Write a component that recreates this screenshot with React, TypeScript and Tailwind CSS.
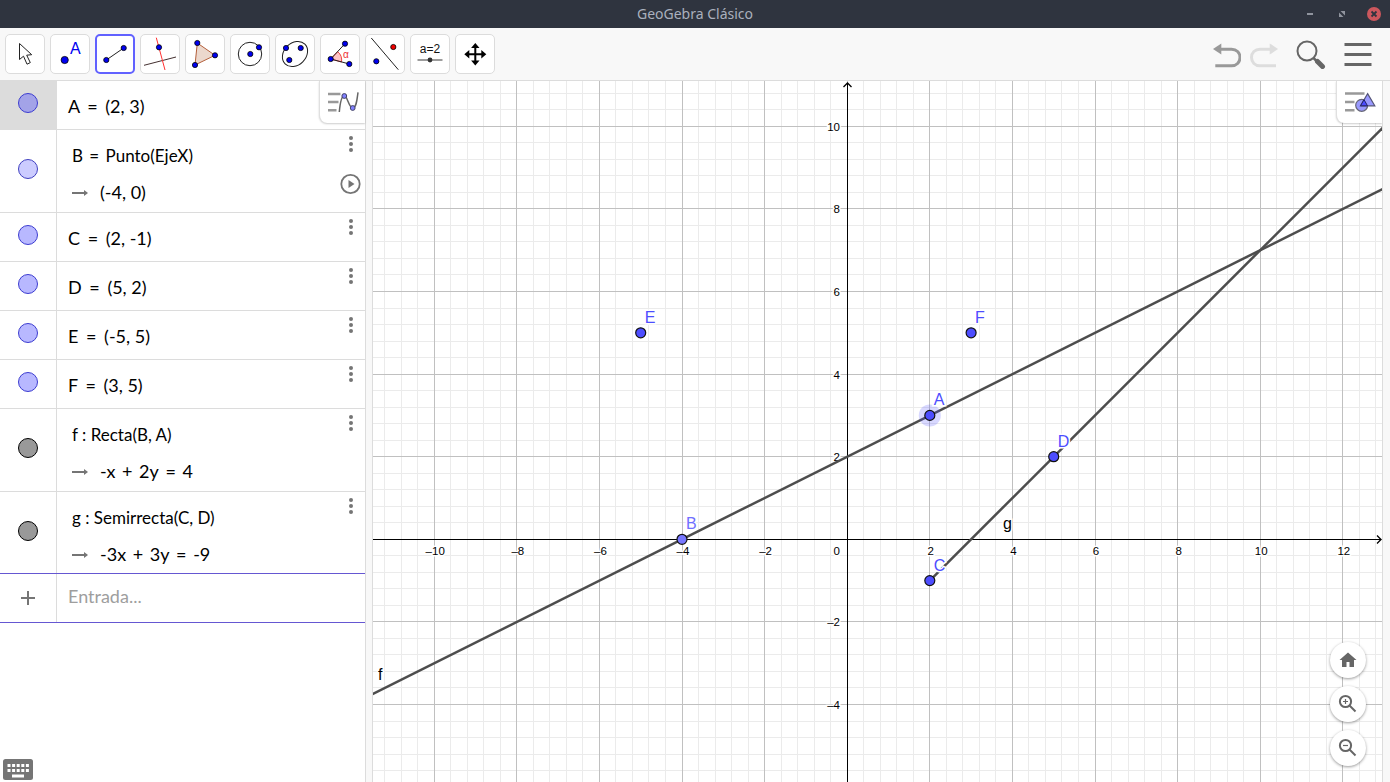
import React from "react";

type Row = {
  id: string;
  left: string;
  op: string;
  right: string;
  value?: string[];
  marble: string;
  play?: boolean;
};

const rows: Row[] = [
  { id: "A", left: "A", op: "=", right: "(2, 3)", marble: "bg-[#a3a3e8] border-[#3c3cd0]" },
  { id: "B", left: "B", op: "=", right: "Punto(EjeX)", value: ["(-4, 0)"], marble: "bg-[#ccccff] border-[#4040c0]", play: true },
  { id: "C", left: "C", op: "=", right: "(2, -1)", marble: "bg-[#b8b8ff] border-[#3c3cd0]" },
  { id: "D", left: "D", op: "=", right: "(5, 2)", marble: "bg-[#b8b8ff] border-[#3c3cd0]" },
  { id: "E", left: "E", op: "=", right: "(-5, 5)", marble: "bg-[#b8b8ff] border-[#3c3cd0]" },
  { id: "F", left: "F", op: "=", right: "(3, 5)", marble: "bg-[#b8b8ff] border-[#3c3cd0]" },
  { id: "f", left: "f", op: ":", right: "Recta(B, A)", value: ["-x", "+", "2y", "=", "4"], marble: "bg-[#999999] border-black" },
  { id: "g", left: "g", op: ":", right: "Semirrecta(C, D)", value: ["-3x", "+", "3y", "=", "-9"], marble: "bg-[#999999] border-black" },
];

const Dot = ({ x, y, r = 2.6, fill = "#0000f0" }: { x: number; y: number; r?: number; fill?: string }) => (
  <circle cx={x} cy={y} r={r} fill={fill} stroke="#000" strokeWidth="0.8" />
);

const tools = [
  {
    name: "Elige y mueve",
    icon: <path d="M14.5 9.5v16l4-3.3 3.5 8 3.3-1.6-3.6-7.4 5-.5z" fill="#fff" stroke="#222" />,
  },
  {
    name: "Punto",
    icon: (
      <>
        <Dot x={14.7} y={26} r={3.6} />
        <text x="20" y="20" fontSize="16" fill="#0000f0">A</text>
      </>
    ),
  },
  {
    name: "Segmento",
    icon: (
      <>
        <path d="M11.3 26 28.7 14" stroke="#222" />
        <Dot x={11.3} y={26} />
        <Dot x={28.7} y={14} />
      </>
    ),
  },
  {
    name: "Perpendicular",
    icon: (
      <>
        <path d="M4 31.3 36 23" stroke="#443030" />
        <path d="M16.3 3.7 25 36" stroke="#ff3030" />
        <Dot x={19} y={13.3} />
      </>
    ),
  },
  {
    name: "Polígono",
    icon: (
      <>
        <path d="M12.3 9 30 21.3 10 31z" fill="#ecd8cd" stroke="#b4603c" />
        <Dot x={12.3} y={9} />
        <Dot x={30} y={21.3} />
        <Dot x={10} y={31} />
      </>
    ),
  },
  {
    name: "Circunferencia",
    icon: (
      <>
        <circle cx="20" cy="20" r="11.7" fill="none" stroke="#222" />
        <Dot x={20.3} y={20} />
        <Dot x={29} y={13.3} />
      </>
    ),
  },
  {
    name: "Elipse",
    icon: (
      <>
        <ellipse cx="20" cy="20" rx="14" ry="11" transform="rotate(-45 20 20)" fill="none" stroke="#222" />
        <Dot x={11} y={14} />
        <Dot x={25.7} y={14} />
        <Dot x={14.3} y={26} />
      </>
    ),
  },
  {
    name: "Ángulo",
    icon: (
      <>
        <path d="M10.7 25 17.7 17.7A11 11 0 0 1 21.5 28z" fill="#ffc4c4" stroke="#ee4444" />
        <path d="M25 9.7 10.7 25 29.3 30" fill="none" stroke="#222" />
        <text x="23" y="24" fontSize="10" fill="#ee3030">α</text>
        <Dot x={25} y={9.7} />
        <Dot x={10.7} y={25} />
        <Dot x={29.3} y={30} />
      </>
    ),
  },
  {
    name: "Simetría axial",
    icon: (
      <>
        <path d="M6.3 4 33.3 35.7" stroke="#222" />
        <Dot x={28.3} y={13} fill="#f00000" />
        <Dot x={11.3} y={27.3} />
      </>
    ),
  },
  {
    name: "Deslizador",
    icon: (
      <>
        <text x="20" y="19" fontSize="12" textAnchor="middle" fill="#111">a=2</text>
        <path d="M7.5 26h25" stroke="#666" strokeWidth="1.3" />
        <circle cx="20" cy="26" r="2.4" fill="#333" />
      </>
    ),
  },
  {
    name: "Desplaza vista gráfica",
    icon: (
      <>
        <path d="M20.3 12v17M12 20.300h17" stroke="#000" strokeWidth="2" />
        <path d="M20.300 9l4.200 5h-8.400zM20.300 31.600l4.200-5h-8.400zM9.300 20.300l5-4.200v8.400zM31.300 20.300l-5-4.200v8.400z" fill="#000" />
      </>
    ),
  },
];

const Toolbar = () => (
  <div className="flex h-[53px] shrink-0 items-center justify-between border-b border-[#dcdcdc] bg-[#f8f8f8] pl-[5px] pr-4">
    <div className="flex gap-[5px]">
      {tools.map((tool, i) => (
        <button
          key={tool.name}
          aria-label={tool.name}
          className={`grid h-10 w-10 place-items-center rounded-[5px] bg-white ${
            i === 2 ? "border-2 border-[#6161ff]" : "border border-[#dcdcdc]"
          }`}
        >
          <svg width="34" height="34" viewBox="3 3 34 34" className="overflow-visible" fontFamily="Liberation Sans, sans-serif">
            {tool.icon}
          </svg>
        </button>
      ))}
    </div>
    <div className="flex items-center">
      <button aria-label="Deshace" className="mr-2">
        <svg width="30" height="30" viewBox="1211 39 30 30" fill="none" stroke="#999" strokeWidth="3">
          <path d="M1220 49.200h11.500c5 0 8.500 3.500 8.500 8.300s-3.500 8.300-8.500 8.300H1215.300" />
          <path d="M1213 49l8.300-5.600v11.200z" fill="#999" stroke="none" />
        </svg>
      </button>
      <button aria-label="Rehace" className="mr-4">
        <svg width="30" height="30" viewBox="1249 39 30 30" fill="none" stroke="#ddd" strokeWidth="3">
          <path d="M1271 49.200h-11c-5 0-8.500 3.500-8.500 8.300s3.500 8.300 8.500 8.300h16" />
          <path d="M1278 49l-8.300-5.600v11.200z" fill="#ddd" stroke="none" />
        </svg>
      </button>
      <button aria-label="Buscar" className="mr-4">
        <svg width="32" height="30" viewBox="1295 39 32 30" fill="none" stroke="#666">
          <circle cx="1307" cy="51" r="9.500" strokeWidth="2" />
          <path d="M1313.500 58l4 4" strokeWidth="2.500" />
          <path d="M1317.500 61.500l5 5" strokeWidth="5" strokeLinecap="round" />
        </svg>
      </button>
      <button aria-label="Menú">
        <svg width="31" height="30" viewBox="1343 39 31 30" stroke="#666" strokeWidth="3">
          <path d="M1344.500 44.500h27M1344.500 54.500h27M1344.500 64.500h27" />
        </svg>
      </button>
    </div>
  </div>
);

const AlgebraRow = ({ row, first, last }: { row: Row; first: boolean; last: boolean }) => (
  <li
    className={`flex shrink-0 ${
      last ? "h-[81px]" : row.value ? "h-[83px] border-b border-[#dcdcdc]" : "h-[49px] border-b border-[#dcdcdc]"
    }`}
  >
    <div className={`flex w-[57px] shrink-0 items-start justify-center border-r border-[#dcdcdc] ${first ? "bg-[#dcdcdc]" : ""}`}>
      <button
        aria-label={`Muestra u oculta ${row.id}`}
        className={`h-5 w-5 rounded-full border ${row.value ? "mt-[29px]" : "mt-3"} ${row.marble}`}
      />
    </div>
    <div className={`grow pt-[7px] ${row.value ? "pl-[15px]" : "pl-[11px]"}`}>
      <p className={`leading-[37px] ${row.value ? "text-[17px]" : "text-[18px]"}`}>
        {row.left} <span className={row.value ? (row.op === "=" ? "mx-[2px]" : "") : "mx-[3px]"}>{row.op}</span> {row.right}
      </p>
      {row.value && (
        <p className="flex items-center text-[18px] leading-[37px]">
          <svg width="17" height="8" viewBox="0 0 17 8" className="mr-[11px]">
            <path d="M0 4h13" stroke="#757575" strokeWidth="2" />
            <path d="M12 1l4 3-4 3z" fill="#757575" />
          </svg>
          <span>
            {row.value.map((part, i) => (
              <span key={i} className={part === "+" || part === "=" ? "mx-[2px]" : ""}>
                {i > 0 ? " " : ""}
                {part}
              </span>
            ))}
          </span>
        </p>
      )}
    </div>
    {!first && (
      <div className="flex w-7 shrink-0 flex-col items-center pt-[6px]">
        <button aria-label={`Opciones de ${row.id}`}>
          <svg width="6" height="16" viewBox="0 0 6 16" fill="#757575">
            <circle cx="3" cy="2" r="2" />
            <circle cx="3" cy="8" r="2" />
            <circle cx="3" cy="14" r="2" />
          </svg>
        </button>
        {row.play && (
          <button aria-label="Reproduce" className="mt-[21px]">
            <svg width="22" height="22" viewBox="0 0 22 22">
              <circle cx="10.500" cy="11" r="9.200" fill="none" stroke="#757575" strokeWidth="1.800" />
              <path d="M8.500 7v8l6-4z" fill="#757575" />
            </svg>
          </button>
        )}
      </div>
    )}
  </li>
);

const AlgebraView = () => (
  <section className="relative flex w-[366px] shrink-0 flex-col border-r border-[#dcdcdc] bg-white font-['Lato','Noto_Sans',sans-serif] text-black">
    <ul>
      {rows.map((row, i) => (
        <AlgebraRow key={row.id} row={row} first={i === 0} last={i === rows.length - 1} />
      ))}
    </ul>
    <div className="flex h-[50px] shrink-0 border-y border-[#6557d2]">
      <label htmlFor="entrada" aria-label="Entrada" className="grid w-[57px] place-items-center border-r border-[#dcdcdc]">
        <svg width="14" height="14" viewBox="0 0 14 14" stroke="#757575" strokeWidth="2">
          <path d="M7 0v14M0 7h14" />
        </svg>
      </label>
      <input id="entrada" placeholder="Entrada..." className="min-w-0 grow pb-1 pl-[11px] text-[18px] outline-none placeholder:text-[#9e9e9e]" />
    </div>

    <button
      aria-label="Barra de estilo algebraica"
      className="absolute right-0 top-0 grid h-[42px] w-[46px] place-items-center rounded-bl-lg border-l border-[#e0e0e0] bg-white shadow-[0_1px_2px_rgba(0,0,0,0.200)]"
    >
      <svg width="32" height="22" viewBox="327 91 32 22" fill="none">
        <path d="M328 94h12.500M328 102h10.500M328 110.300h8.500" stroke="#999" strokeWidth="2.600" />
        <path d="M339.300 112C340 104 341.500 96 344.300 95.700S349 108 352.700 108 357 100 358 92.300" stroke="#666" strokeWidth="1.500" />
        <circle cx="344.300" cy="96" r="2.400" fill="#8080ff" stroke="#444466" />
        <circle cx="352.700" cy="108" r="2.400" fill="#8080ff" stroke="#444466" />
      </svg>
    </button>
    <button aria-label="Teclado" className="absolute bottom-[2px] left-[3px]">
      <svg width="30" height="21" viewBox="0 0 30 21">
        <rect width="30" height="21" rx="2.500" fill="#757575" />
        <path d="M4.500 6.500h22M4.500 11.500h22" stroke="#fff" strokeWidth="3" strokeDasharray="3 1.600" />
        <path d="M9 17h12" stroke="#fff" strokeWidth="3" />
      </svg>
    </button>
  </section>
);

// graph geometry, in view units
const W = 1009;
const H = 701;
const OX = 474.2;
const OY = 458.3;
const UNIT = 41.3;
const px = (x: number) => OX + x * UNIT;
const py = (y: number) => OY - y * UNIT;
const snap = (v: number) => Math.floor(v) + 0.5;

const range = (from: number, to: number) => Array.from({ length: to - from + 1 }, (_, i) => from + i);

const points = [
  { name: "A", x: 2, y: 3 },
  { name: "B", x: -4, y: 0 },
  { name: "C", x: 2, y: -1 },
  { name: "D", x: 5, y: 2 },
  { name: "E", x: -5, y: 5 },
  { name: "F", x: 3, y: 5 },
];

const format = (n: number) => (n < 0 ? `–${-n}` : `${n}`);

const Graph = () => (
  <svg
    viewBox={`0 0 ${W} ${H}`}
    preserveAspectRatio="xMinYMin slice"
    className="h-full w-full"
    fontFamily="Liberation Sans, sans-serif"
  >
    <g shapeRendering="crispEdges">
      {range(-28, 32).map((i) => (
        <path key={`v${i}`} d={`M${snap(px(i * 0.4))} 0V${H}`} stroke="#ebebeb" />
      ))}
      {range(-14, 27).map((i) => (
        <path key={`h${i}`} d={`M0 ${snap(py(i * 0.4))}H${W}`} stroke="#ebebeb" />
      ))}
      {range(-5, 6).map((i) => (
        <path key={`V${i}`} d={`M${snap(px(i * 2))} 0V${H}`} stroke="#c0c0c0" />
      ))}
      {range(-2, 5).map((i) => (
        <path key={`H${i}`} d={`M0 ${snap(py(i * 2))}H${W}`} stroke="#c0c0c0" />
      ))}
      <path d={`M${snap(OX)} 2V${H}M0 ${snap(OY)}H${W - 1}`} stroke="#000" />
    </g>
    <path d={`M470.500 6 ${snap(OX)} 2 478.500 6M1004 454.500 1008 ${snap(OY)} 1004 462.500`} fill="none" stroke="#000" strokeWidth="1.300" />

    <g fontSize="11.500" fill="#000" stroke="#fff" strokeWidth="3" paintOrder="stroke">
      {range(-5, 6)
        .filter((i) => i !== 0)
        .map((i) => (
          <text key={i} x={px(i * 2) + 1} y={474} textAnchor="middle">
            {format(i * 2)}
          </text>
        ))}
      {range(-2, 5)
        .filter((i) => i !== 0)
        .map((i) => (
          <text key={i} x={467} y={py(i * 2) + 4.5} textAnchor="end">
            {format(i * 2)}
          </text>
        ))}
      <text x={467} y={474} textAnchor="end">0</text>
    </g>

    <g stroke="#4d4d4d" strokeWidth="2.500">
      <path d={`M${px(-14)} ${py(-5)}L${px(16)} ${py(10)}`} />
      <path d={`M${px(2)} ${py(-1)}L${px(16)} ${py(13)}`} />
    </g>
    <circle cx={px(2)} cy={py(3)} r="11" fill="#4d4dff" fillOpacity="0.220" />

    <g fontSize="16" stroke="#fff" strokeWidth="3" paintOrder="stroke">
      {points.map((p) => (
        <text key={p.name} x={px(p.x) + 4} y={py(p.y) - 10} fill={p.name === "B" ? "#7070ff" : "#4d4dff"}>
          {p.name}
        </text>
      ))}
      <text x="5" y="599">f</text>
      <text x="630" y="448">g</text>
    </g>
    {points.map((p) => (
      <circle
        key={p.name}
        cx={px(p.x)}
        cy={py(p.y)}
        r="5"
        fill={p.name === "B" ? "#7777ff" : "#4d4dff"}
        stroke="#111"
        strokeWidth="1.200"
      />
    ))}
  </svg>
);

const zoomButton = "grid h-9 w-9 place-items-center rounded-full bg-white shadow-[0_1px_3px_rgba(0,0,0,0.400)]";

const GraphicsView = () => (
  <section className="relative min-w-0 grow overflow-hidden bg-white">
    <Graph />
    <button
      aria-label="Barra de estilo gráfica"
      className="absolute right-0 top-0 grid h-[42px] w-[46px] place-items-center rounded-bl-lg border-l border-[#e0e0e0] bg-white shadow-[0_1px_2px_rgba(0,0,0,0.200)]"
    >
      <svg width="32" height="22" viewBox="1344 91 32 22">
        <path d="M1345 93.500h19.500M1345 102h9.500M1345 110.300h9.500" stroke="#999" strokeWidth="2.600" />
        <circle cx="1361.700" cy="105.300" r="6" fill="#9999ff" stroke="#666677" strokeWidth="1.200" />
        <path d="M1367.600 93.600 1374.800 105.800H1360.500z" fill="#9999ff" stroke="#555577" strokeWidth="1.200" />
        <path d="M1364 99.700l3.500 6.100h-7z" fill="#4d4dff" stroke="#222266" />
      </svg>
    </button>
    <div className="absolute bottom-4 right-4 flex flex-col gap-2">
      <button aria-label="Vista estándar" className={zoomButton}>
        <svg width="20" height="20" viewBox="0 0 20 20" fill="#666">
          <path d="M10 2.500 1.500 10H4v7h4.500v-5h3v5H16v-7h2.500z" />
        </svg>
      </button>
      <button aria-label="Acerca" className={zoomButton}>
        <svg width="20" height="20" viewBox="0 0 20 20" fill="none" stroke="#666" strokeWidth="2">
          <circle cx="7.500" cy="7.500" r="5.600" />
          <path d="M11.500 11.500l6 6" />
          <path d="M7.500 5v5M5 7.500h5" strokeWidth="1.200" />
        </svg>
      </button>
      <button aria-label="Aleja" className={zoomButton}>
        <svg width="20" height="20" viewBox="0 0 20 20" fill="none" stroke="#666" strokeWidth="2">
          <circle cx="7.500" cy="7.500" r="5.600" />
          <path d="M11.500 11.500l6 6" />
          <path d="M5 7.500h5" strokeWidth="1.200" />
        </svg>
      </button>
    </div>
  </section>
);

const TitleBar = () => (
  <header className="grid h-7 shrink-0 grid-cols-[1fr_auto_1fr] items-center bg-[#2f343f] font-['Noto_Sans',sans-serif]">
    <span />
    <h1 className="text-[14px] leading-5 text-[#aab0bd]">GeoGebra Clásico</h1>
    <div className="flex justify-end gap-4 pr-2">
      <button aria-label="Minimizar">
        <svg width="16" height="16" viewBox="0 0 16 16">
          <path d="M5 8h6" stroke="#90949e" strokeWidth="2" />
        </svg>
      </button>
      <button aria-label="Restaurar">
        <svg width="16" height="16" viewBox="0 0 16 16" fill="#90949e">
          <path d="M6.500 5H11v4.500zM5 6.500V11h4.500z" />
        </svg>
      </button>
      <button aria-label="Cerrar">
        <svg width="16" height="16" viewBox="0 0 16 16">
          <circle cx="8" cy="8" r="7" fill="#cc575d" />
          <path d="M5.500 5.500l5 5M10.500 5.500l-5 5" stroke="#2f343f" strokeWidth="1.800" />
        </svg>
      </button>
    </div>
  </header>
);

const App: React.FC = () => {
  return (
    <div className="flex h-screen flex-col overflow-hidden bg-[#f8f8f8]">
      <TitleBar />
      <Toolbar />
      <main className="flex min-h-0 grow">
        <AlgebraView />
        {/* splitter */}
        <div className="w-[7px] shrink-0 border-r border-[#dcdcdc]" />
        <GraphicsView />
        <div className="w-2 shrink-0 border-l border-[#dcdcdc]" />
      </main>
    </div>
  );
};

export default App;
